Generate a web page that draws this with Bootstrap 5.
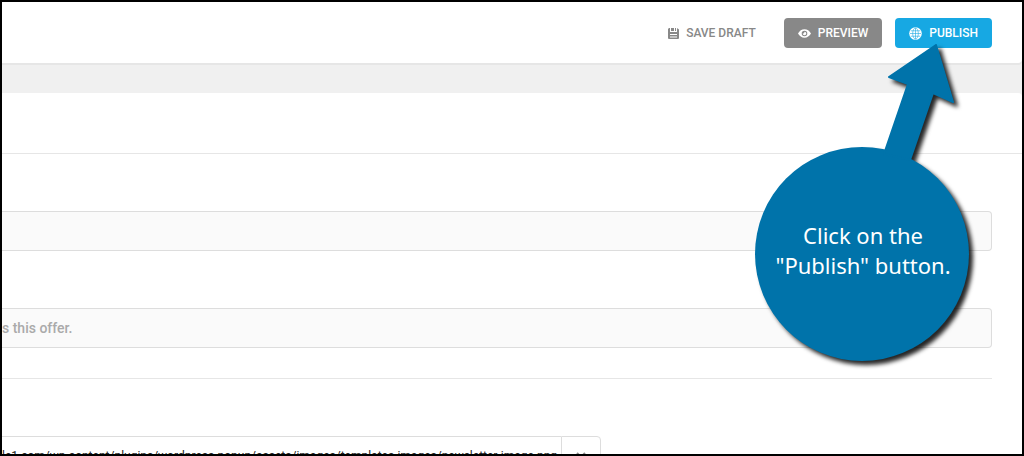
<!DOCTYPE html>
<html lang="en">
<head>
<meta charset="utf-8">
<meta name="viewport" content="width=device-width, initial-scale=1">
<title>Publish module</title>
<link href="https://cdn.jsdelivr.net/npm/bootstrap@5.3.0/dist/css/bootstrap.min.css" rel="stylesheet">
<style>
  body { font-family: Roboto, "Liberation Sans", sans-serif; background: #f0f0f0; }
  .frame { height: 100vh; border: 2px solid #000; }
  .topbar { height: 61px; padding: 16px 30px 0 0; gap: 13px; border-radius: 0 0 4px 0; box-shadow: 0 2px 0 #e6e6e6; }
  .tool { --bs-btn-border-width: 0; --bs-btn-border-radius: 4px; height: 30px; padding: 0 14px; gap: 7px;
    display: inline-flex; align-items: center; font-size: 12px; font-weight: 500; line-height: 30px; color: #fff; }
  .tool svg { width: 13px; height: 13px; }
  .tool-draft { padding: 0 15px; gap: 6px; color: #888; }
  .tool-preview, .tool-preview:hover { background: #888; color: #fff; }
  .tool-publish, .tool-publish:hover { background: #17a8e3; color: #fff; }
  .panel { margin-top: 30px; border-radius: 0 4px 0 0; }
  .panel-head { height: 61px; border-bottom: 1px solid #e6e6e6; }
  .fields { margin-right: 30px; padding-top: 57px; }
  .field { height: 40px; padding: 0; border: 1px solid #ddd; border-left: 0; border-radius: 0 4px 4px 0; background: #fafafa;
    font-size: 14px; font-weight: 500; }
  .field::placeholder { color: #aaa; }
  .field-gap { margin-top: 57px; }
  .rule { margin: 30px 0 0; border-top: 1px solid #e6e6e6; opacity: 1; }
  .picker { width: 599px; margin-top: 57px; }
  .picker .field { background: #fff; font-size: 12px; font-weight: 400; color: #222; }
  .picker .remove { width: 40px; height: 40px; padding: 0; border: 1px solid #ddd; border-radius: 0 4px 4px 0; }
  .callout { top: 38px; right: 45px; width: 224px; height: 336px; pointer-events: none; }
  .callout svg { filter: drop-shadow(4px 4px 2px rgba(0,0,0,.85)); overflow: visible; }
  .callout-text { top: 180px; left: 0; width: 220px; margin: 0; color: #fff; font: 22px/30px "Noto Sans", "Open Sans", sans-serif; }
</style>
</head>
<body>
<div class="frame position-relative overflow-hidden">
  <header class="topbar bg-white d-flex align-items-start justify-content-end">
    <button type="button" class="btn tool tool-draft">
      <svg viewBox="0 0 13 13" fill="currentColor" aria-hidden="true"><path fill-rule="evenodd" d="M1 2L2 1h1v4h7V1l2 1.500V11a1 1 0 0 1-1 1H2a1 1 0 0 1-1-1zM3 7v1h7V7zM3 9.500v1h7v-1z"/><path d="M4 1h3v3H4zM8 1h1v3H8z"/></svg>
      SAVE DRAFT
    </button>
    <button type="button" class="btn tool tool-preview">
      <svg viewBox="0 0 13 13" fill="currentColor" aria-hidden="true"><path fill-rule="evenodd" d="M0 6.500C1.500 3.800 3.800 2.300 6.500 2.300S11.500 3.800 13 6.500c-1.500 2.700-3.800 4.200-6.500 4.200S1.500 9.200 0 6.500zM6.500 3.700a2.800 2.800 0 1 0 0 5.600 2.800 2.800 0 0 0 0-5.600z"/><path d="M6.500 4.700a1.800 1.800 0 1 1-1.800 1.800c.8.300 1.800-.8 1.800-1.800z"/></svg>
      PREVIEW
    </button>
    <button type="button" class="btn tool tool-publish">
      <svg viewBox="0 0 13 13" aria-hidden="true"><circle cx="6.500" cy="6.500" r="6.300" fill="#fff"/><g fill="none" stroke="#17a8e3" stroke-width=".6"><ellipse cx="6.500" cy="6.500" rx="2.800" ry="5.500"/><path d="M6.500 1v11M1 6.500h11M1.800 3.800h9.400M1.800 9.200h9.400"/></g></svg>
      PUBLISH
    </button>
  </header>

  <main class="panel bg-white">
    <div class="panel-head"></div>
    <div class="fields">
      <input type="text" class="form-control field" aria-label="Title">
      <input type="text" class="form-control field field-gap" placeholder="s this offer." aria-label="Message">
      <hr class="rule">
    </div>
    <div class="picker d-flex">
      <input type="text" class="form-control field rounded-0 border-end-0" aria-label="Image address" value="le1.com/wp-content/plugins/wordpress-popup/assets/images/templates-images/newsletter-image.png">
      <button type="button" class="btn remove flex-shrink-0" aria-label="Remove image">
        <svg width="10" height="10" viewBox="0 0 10 10" stroke="#888" stroke-width="2" aria-hidden="true"><path d="M1 1l8 8M9 1L1 9"/></svg>
      </button>
    </div>
  </main>

  <div class="callout position-absolute">
    <svg width="224" height="336" viewBox="0 0 224 336" fill="#0073aa" aria-hidden="true">
      <circle cx="109" cy="214" r="107"/>
      <path d="M183 5 L136 37 L155 44 L131 114 L157 120 L180 53 L200 62 Z" stroke="#0073aa" stroke-width="2" stroke-linejoin="round"/>
    </svg>
    <p class="callout-text position-absolute text-center">Click on the<br>"Publish" button.</p>
  </div>
</div>
<script src="https://cdn.jsdelivr.net/npm/bootstrap@5.3.0/dist/js/bootstrap.bundle.min.js"></script>
</body>
</html>
